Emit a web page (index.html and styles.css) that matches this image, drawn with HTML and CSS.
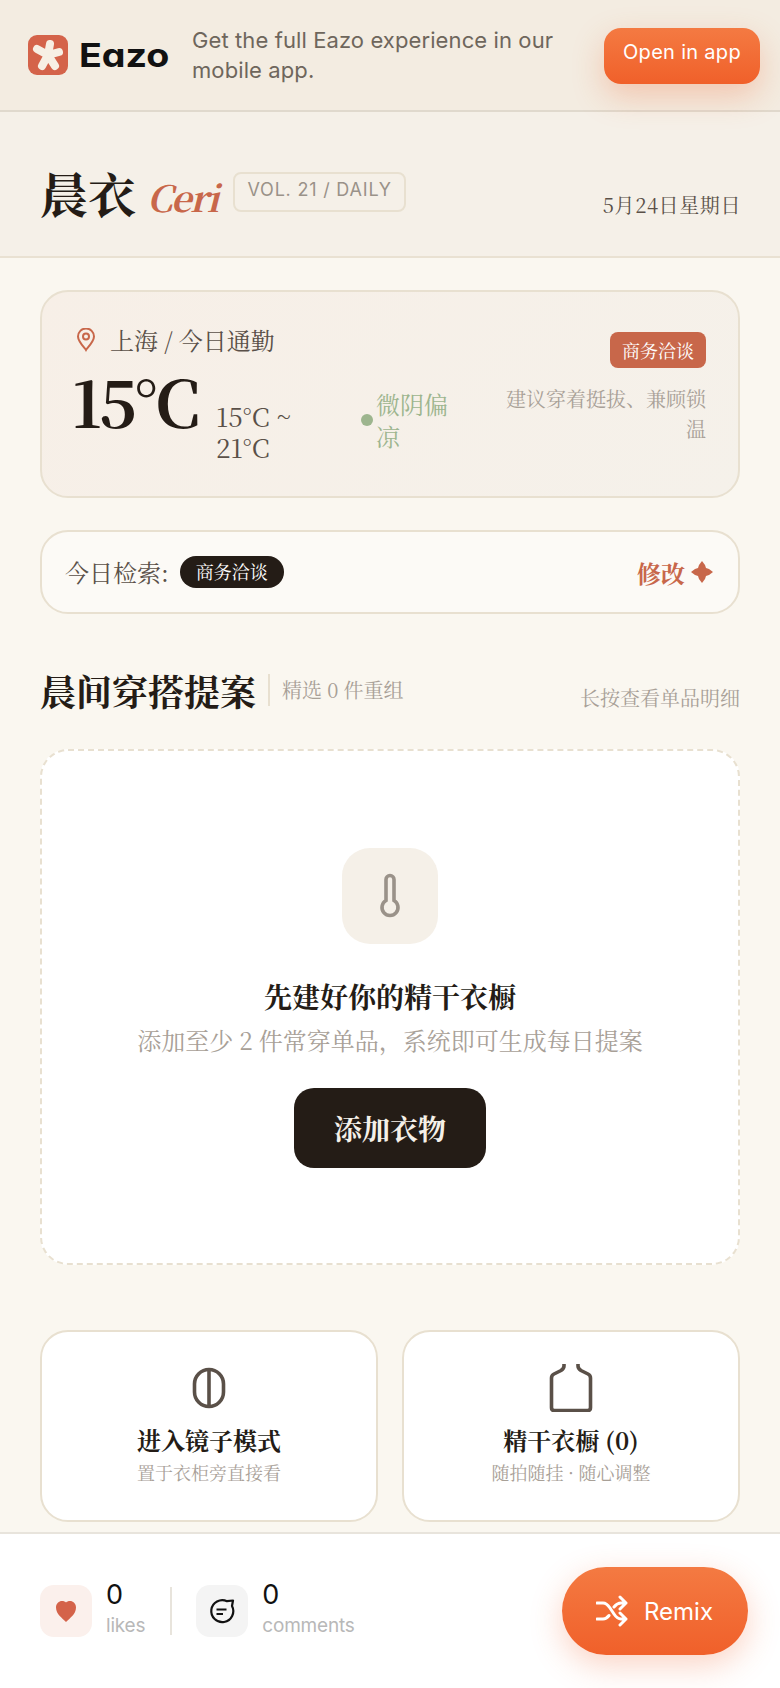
FILE: index.html
```html
<!DOCTYPE html>
<html lang="zh-CN">
<head>
<meta charset="utf-8">
<title>晨衣 Ceri</title>
<link rel="stylesheet" href="styles.css">
</head>
<body>
<div class="page">
  <section class="banner">
    <svg class="logo-mark" viewBox="0 0 40 40" aria-hidden="true">
      <rect width="40" height="40" rx="9" fill="#d4634a"/>
      <path d="M20 20L22 9M20 20L31 17M20 20L27 31M20 20L14 31M20 20L9 14" fill="none" stroke="#f7efe4" stroke-width="8" stroke-linecap="round"/>
    </svg>
    <span class="wordmark">Eazo</span>
    <p class="banner-copy">Get the full Eazo experience in our mobile app.</p>
    <a class="open-app">Open in app</a>
  </section>

  <header class="masthead">
    <h1 class="brand-cn">晨衣</h1>
    <span class="brand-en">Ceri</span>
    <span class="volume">VOL. 21 / DAILY</span>
    <time class="today">5月24日星期日</time>
  </header>

  <main class="content">
    <section class="weather">
      <div class="weather-top">
        <div class="place">
          <svg class="pin" viewBox="0 0 20 24" aria-hidden="true">
            <path d="M10 22c-1-1.600-8-8.500-8-13.500a8 8 0 0 1 16 0C18 13.500 11 20.400 10 22z" fill="none" stroke="#c8674a" stroke-width="2"/>
            <circle cx="10" cy="8.500" r="3" fill="none" stroke="#c8674a" stroke-width="2"/>
          </svg>
          <span>上海 / 今日通勤</span>
        </div>
        <span class="scene-tag">商务洽谈</span>
      </div>
      <div class="weather-main">
        <strong class="temp">15°C</strong>
        <span class="range">15°C ~ 21°C</span>
        <span class="sky"><i class="sky-dot"></i><span class="sky-text">微阴偏凉</span></span>
        <span class="advice">建议穿着挺拔、兼顾锁温</span>
      </div>
    </section>

    <section class="search">
      <span class="search-label">今日检索:</span>
      <span class="search-pill">商务洽谈</span>
      <a class="search-edit">修改
        <svg class="sparkle" viewBox="0 0 24 24" aria-hidden="true">
          <path d="M12 1l3 4 1 3 3 1 4 3-4 3-3 1-1 3-3 4-3-4-1-3-3-1-4-3 4-3 3-1 1-3z" fill="#c8674a"/>
        </svg>
      </a>
    </section>

    <section class="section-head">
      <h2>晨间穿搭提案</h2>
      <span class="section-count">精选 0 件重组</span>
      <span class="section-hint">长按查看单品明细</span>
    </section>

    <section class="empty">
      <div class="empty-icon">
        <svg viewBox="0 0 24 48" width="24" height="48" aria-hidden="true">
          <path d="M8 7.500a4 4 0 0 1 8 0v21a8 8 0 1 1-8 0z" fill="none" stroke="#9a9289" stroke-width="3.600"/>
        </svg>
      </div>
      <h3>先建好你的精干衣橱</h3>
      <p>添加至少 2 件常穿单品，系统即可生成每日提案</p>
      <button class="add-btn">添加衣物</button>
    </section>

    <section class="actions">
      <article class="action">
        <svg class="action-icon" viewBox="0 0 48 48" aria-hidden="true">
          <rect x="9.500" y="5.500" width="29" height="37" rx="14.500" fill="none" stroke="#5a5048" stroke-width="3.600"/>
          <path d="M24 5.500v37" stroke="#5a5048" stroke-width="3.600"/>
        </svg>
        <h4>进入镜子模式</h4>
        <p>置于衣柜旁直接看</p>
      </article>
      <article class="action">
        <svg class="action-icon" viewBox="0 0 48 48" aria-hidden="true">
          <path d="M17 0v2c0 2.500-1.500 3.500-3 4.500L7 10c-1.600.8-2.500 2-2.500 4v29.500c0 2 1 3 3 3h33c2 0 3-1 3-3V14c0-2-.9-3.200-2.500-4l-7-3.500c-1.500-1-3-2-3-4.500V0" fill="none" stroke="#5a5048" stroke-width="3.600"/>
        </svg>
        <h4>精干衣橱 (0)</h4>
        <p>随拍随挂 · 随心调整</p>
      </article>
    </section>
  </main>

  <footer class="dock">
    <div class="stat">
      <span class="stat-icon stat-like">
        <svg viewBox="0 0 24 24" width="24" height="24" aria-hidden="true">
          <path d="M12 23C8 19 2 15 2 8.500 2 4.500 5 2 8 2c1.800 0 3 .5 4 1.500 1-1 2.200-1.500 4-1.500 3 0 6 2.500 6 6.500 0 6.500-6 10.500-10 14.500z" fill="#d4634a"/>
        </svg>
      </span>
      <span class="stat-text"><b>0</b><small>likes</small></span>
    </div>
    <i class="dock-rule"></i>
    <div class="stat">
      <span class="stat-icon stat-comment">
        <svg viewBox="0 0 28 28" width="28" height="28" aria-hidden="true">
          <path d="M25 3.500l-1 5.500A11 11 0 1 1 19 4.200z" fill="none" stroke="#111" stroke-width="2.200" stroke-linejoin="round"/>
          <path d="M8.500 12.500h10M8.500 17h6.500" stroke="#111" stroke-width="2.200"/>
        </svg>
      </span>
      <span class="stat-text"><b>0</b><small>comments</small></span>
    </div>
    <a class="remix">
      <svg viewBox="0 0 32 32" width="32" height="32" aria-hidden="true">
        <path d="M1 8h6c3 0 5 2 7 5l4 6c2 3 4 5 7 5h5M1 24h6c3 0 4.500-1.500 6-3.500M18 12c2-2.500 4-4 7-4h5M24 2l6 6-6 6M24 18l6 6-6 6" fill="none" stroke="#fff" stroke-width="3" stroke-linecap="round" stroke-linejoin="round"/>
      </svg>
      <span>Remix</span>
    </a>
  </footer>
</div>
</body>
</html>
```

FILE: styles.css
```css
* { box-sizing: border-box; }

html, body { margin: 0; padding: 0; }

body {
  background: #faf7f0;
  color: #241c16;
  font-family: "Noto Serif CJK SC", "Noto Serif", serif;
}

h1, h2, h3, h4, p { margin: 0; }

.page {
  display: flex;
  flex-direction: column;
  height: 100vh;
  overflow: hidden;
}

/* App promo strip */
.banner {
  position: relative;
  z-index: 2;
  flex: none;
  display: flex;
  align-items: center;
  height: 112px;
  padding: 0 20px 0 28px;
  background: #f3ece1;
  border-bottom: 2px solid #e0d9cd;
  font-family: Inter, sans-serif;
}

.logo-mark { flex: none; width: 40px; height: 40px; }

.wordmark {
  flex: none;
  width: 113px;
  margin-left: 11px;
  color: #111;
  font-size: 33px;
  font-weight: 700;
  font-feature-settings: "cv11";
  transform: scaleX(1.14);
  transform-origin: left center;
}

.banner-copy {
  flex: 1;
  color: #6e665c;
  font-size: 22px;
  line-height: 30px;
  letter-spacing: 0.1px;
}

.open-app {
  flex: none;
  width: 156px;
  height: 56px;
  margin-top: 2px;
  border-radius: 17px;
  background: linear-gradient(#f47a42, #f0602a);
  box-shadow: 0 12px 32px rgba(240, 96, 42, 0.28);
  color: #fff;
  font-size: 20px;
  line-height: 48px;
  letter-spacing: 0.3px;
  text-align: center;
}

/* Title row */
.masthead {
  flex: none;
  display: flex;
  align-items: flex-start;
  height: 146px;
  padding: 52px 39px 0 40px;
  background: #f5f0e8;
  border-bottom: 2px solid #e9e1d2;
}

.brand-cn { font-size: 48px; line-height: 58px; font-weight: 700; }

.brand-en {
  margin: 7px 0 0 11px;
  color: #c8674a;
  font-size: 36px;
  line-height: 52px;
  font-style: italic;
  font-weight: 700;
  letter-spacing: -1.5px;
}

.volume {
  margin: 8px 0 0 16px;
  padding: 0 12px;
  height: 40px;
  border: 2px solid #e8e0d0;
  border-radius: 8px;
  color: #9a9289;
  font-family: Inter, sans-serif;
  font-size: 18px;
  line-height: 32px;
  letter-spacing: 0.8px;
}

.today {
  margin: 26px 0 0 auto;
  color: #5a5048;
  font-size: 20px;
  line-height: 30px;
  letter-spacing: 0.6px;
}

/* Scrolling body */
.content {
  flex: 1;
  min-height: 0;
  overflow: hidden;
  padding: 32px 40px 0;
}

.weather {
  height: 208px;
  padding: 32px 32px 0 30px;
  border: 2px solid #e8e0d0;
  border-radius: 28px;
  background: linear-gradient(135deg, #f7efe7, #f5f1ea);
}

.weather-top { display: flex; justify-content: space-between; }

.place {
  display: flex;
  align-items: center;
  gap: 14px;
  height: 30px;
  color: #5a5048;
  font-size: 24px;
}

.pin { width: 20px; height: 24px; margin: 2px 0 0 4px; }

.scene-tag {
  margin-top: 8px;
  padding: 0 12px;
  height: 36px;
  border-radius: 8px;
  background: #c8674a;
  color: #fff;
  font-size: 18px;
  line-height: 36px;
}

.weather-main { display: flex; align-items: flex-start; margin-top: -9px; }

.temp {
  flex: none;
  width: 144px;
  margin-top: 3px;
  font-size: 64px;
  line-height: 76px;
  letter-spacing: -2.5px;
}

.range {
  flex: none;
  width: 90px;
  margin-top: 41px;
  color: #5a5048;
  font-size: 26px;
  line-height: 31px;
}

.sky {
  flex: none;
  display: flex;
  align-items: center;
  gap: 3px;
  width: 90px;
  margin: 29px 0 0 55px;
  color: #9db58e;
  font-size: 24px;
  line-height: 32px;
}

.sky-dot {
  flex: none;
  width: 12px;
  height: 12px;
  border-radius: 50%;
  background: #9db58e;
}

.sky-text { width: 73px; }

.advice {
  flex: none;
  width: 200px;
  margin: 25px 0 0 auto;
  color: #a8a097;
  font-size: 20px;
  line-height: 30px;
  text-align: right;
}

.search {
  display: flex;
  align-items: center;
  height: 84px;
  margin-top: 32px;
  padding: 0 24px 0 23px;
  border: 2px solid #e8e0d0;
  border-radius: 28px;
  background: #fcfaf6;
}

.search-label { margin-top: -1px; color: #5a5048; font-size: 24px; }

.search-pill {
  margin: -1px 0 0 11px;
  padding: 0 16px;
  height: 32px;
  border-radius: 16px;
  background: #241c16;
  color: #fff;
  font-size: 18px;
  line-height: 30px;
}

.search-edit {
  display: flex;
  align-items: center;
  gap: 5px;
  margin-left: auto;
  color: #c8674a;
  font-size: 24px;
  font-weight: 700;
}

.sparkle { width: 24px; height: 24px; }

.section-head {
  display: flex;
  align-items: flex-start;
  height: 78px;
  margin-top: 57px;
}

.section-head h2 { margin-top: -4px; font-size: 36px; line-height: 48px; font-weight: 700; }

.section-count {
  margin: 3px 0 0 12px;
  padding-left: 12px;
  height: 32px;
  border-left: 2px solid #e8e0d0;
  color: #a8a097;
  font-size: 20px;
  line-height: 32px;
}

.section-hint {
  margin: 11px 0 0 auto;
  color: #a8a097;
  font-size: 20px;
  line-height: 32px;
}

.empty {
  display: flex;
  flex-direction: column;
  align-items: center;
  height: 516px;
  padding-top: 97px;
  border: 2px dashed #e8e0d0;
  border-radius: 28px;
  background: #fff;
}

.empty-icon {
  display: flex;
  align-items: center;
  justify-content: center;
  width: 96px;
  height: 96px;
  border-radius: 28px;
  background: #f5f0e8;
}

.empty h3 { margin-top: 32px; font-size: 28px; line-height: 40px; font-weight: 700; }

.empty p { margin-top: 6px; color: #a8a097; font-size: 24px; line-height: 36px; }

.add-btn {
  width: 192px;
  height: 80px;
  margin-top: 30px;
  border: 0;
  border-radius: 20px;
  background: #241c16;
  color: #f5f0e8;
  font-family: inherit;
  font-size: 28px;
  font-weight: 700;
}

.actions {
  display: grid;
  grid-template-columns: 1fr 1fr;
  gap: 24px;
  margin-top: 65px;
}

.action {
  display: flex;
  flex-direction: column;
  align-items: center;
  height: 192px;
  padding-top: 32px;
  border: 2px solid #e8e0d0;
  border-radius: 28px;
  background: #fff;
}

.action-icon { width: 48px; height: 48px; }

.action h4 { margin-top: 10px; font-size: 24px; line-height: 36px; font-weight: 700; }

.action p { margin-top: 1px; color: #a8a097; font-size: 18px; line-height: 26px; }

/* Bottom action dock */
.dock {
  flex: none;
  display: flex;
  align-items: center;
  height: 156px;
  padding: 0 32px 0 40px;
  background: #fff;
  border-top: 2px solid #e8e4dc;
  font-family: Inter, sans-serif;
}

.stat { display: flex; align-items: center; gap: 14px; }

.stat-icon {
  display: flex;
  align-items: center;
  justify-content: center;
  width: 52px;
  height: 52px;
  border-radius: 14px;
}

.stat-like { background: #fbf0ec; }
.stat-comment { background: #f4f4f4; }

.stat-text { display: flex; flex-direction: column; margin-top: -2px; }

.stat-text b { color: #111; font-size: 27px; font-weight: 400; line-height: 32px; }

.stat-text small { color: #b8b8b8; font-size: 19px; line-height: 30px; letter-spacing: -0.2px; }

.dock-rule {
  width: 2px;
  height: 48px;
  margin: 0 24px 0 25px;
  background: #e8e4dc;
}

.remix {
  display: flex;
  align-items: center;
  gap: 16px;
  width: 186px;
  height: 88px;
  margin-left: auto;
  padding-left: 34px;
  border-radius: 44px;
  background: linear-gradient(#f47a42, #f0602a);
  box-shadow: 0 10px 32px rgba(240, 96, 42, 0.28);
  color: #fff;
  font-size: 24px;
}
```
